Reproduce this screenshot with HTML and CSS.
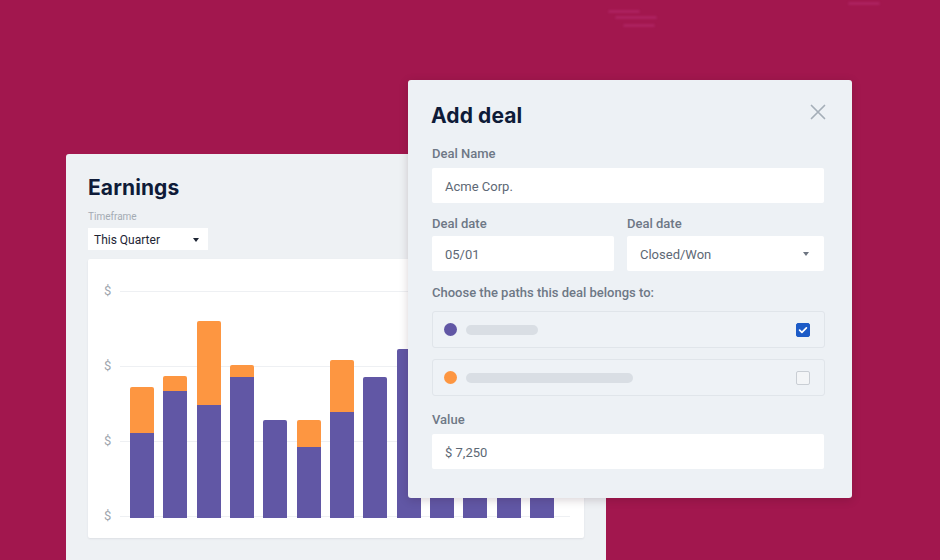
FILE: index.html
```html
<!DOCTYPE html>
<html lang="en">
<head>
<meta charset="utf-8">
<title>Add deal</title>
<link rel="stylesheet" href="styles.css">
</head>
<body>
<div class="stage">
  <span class="deco deco-a"></span>
  <span class="deco deco-b"></span>
  <span class="deco deco-c"></span>
  <span class="deco deco-d"></span>

  <section class="earnings">
    <h2 class="card-title">Earnings</h2>
    <div class="tf-label">Timeframe</div>
    <div class="tf-select"><span>This Quarter</span><span class="caret caret-dark"></span></div>
    <div class="chart">
      <div class="plot">
        <div class="axis">
          <div class="tick"><span>$</span><i></i></div>
          <div class="tick"><span>$</span><i></i></div>
          <div class="tick"><span>$</span><i></i></div>
          <div class="tick"><span>$</span><i></i></div>
        </div>
        <div class="bars">
          <div class="bar"><div class="seg o" style="height:46px"></div><div class="seg p" style="height:85px"></div></div>
          <div class="bar"><div class="seg o" style="height:15px"></div><div class="seg p" style="height:127px"></div></div>
          <div class="bar"><div class="seg o" style="height:84px"></div><div class="seg p" style="height:113px"></div></div>
          <div class="bar"><div class="seg o" style="height:12px"></div><div class="seg p" style="height:141px"></div></div>
          <div class="bar"><div class="seg p" style="height:98px"></div></div>
          <div class="bar"><div class="seg o" style="height:27px"></div><div class="seg p" style="height:71px"></div></div>
          <div class="bar"><div class="seg o" style="height:52px"></div><div class="seg p" style="height:106px"></div></div>
          <div class="bar"><div class="seg p" style="height:141px"></div></div>
          <div class="bar"><div class="seg p" style="height:169px"></div></div>
          <div class="bar"><div class="seg o" style="height:30px"></div><div class="seg p" style="height:120px"></div></div>
          <div class="bar"><div class="seg p" style="height:150px"></div></div>
          <div class="bar"><div class="seg o" style="height:24px"></div><div class="seg p" style="height:135px"></div></div>
          <div class="bar"><div class="seg p" style="height:110px"></div></div>
        </div>
      </div>
    </div>
  </section>

  <section class="modal">
    <div class="modal-head">
      <h2 class="modal-title">Add deal</h2>
      <svg class="close" width="16" height="16" viewBox="0 0 16 16" aria-hidden="true">
        <path d="M1.5 1.5 L14.5 14.5 M14.5 1.5 L1.5 14.5" stroke="#A5AEB8" stroke-width="1.7" stroke-linecap="round" fill="none"/>
      </svg>
    </div>

    <div class="field">
      <div class="label">Deal Name</div>
      <div class="input">Acme Corp.</div>
    </div>

    <div class="field date-row">
      <div>
        <div class="label">Deal date</div>
        <div class="input">05/01</div>
      </div>
      <div>
        <div class="label">Deal date</div>
        <div class="input select"><span>Closed/Won</span><span class="caret caret-gray"></span></div>
      </div>
    </div>

    <div class="paths">
      <div class="label paths-label">Choose the paths this deal belongs to:</div>
      <div class="path-row">
        <span class="dot dot-purple"></span>
        <span class="ph ph-short"></span>
        <span class="check checked">
          <svg width="14" height="14" viewBox="0 0 14 14" aria-hidden="true"><path d="M3.6 7.2 L5.9 9.4 L10.4 4.8" stroke="#fff" stroke-width="1.7" fill="none" stroke-linecap="round" stroke-linejoin="round"/></svg>
        </span>
      </div>
      <div class="path-row">
        <span class="dot dot-orange"></span>
        <span class="ph ph-long"></span>
        <span class="check"></span>
      </div>
    </div>

    <div class="field value-field">
      <div class="label">Value</div>
      <div class="input">$ 7,250</div>
    </div>
  </section>
</div>
</body>
</html>
```

FILE: styles.css
```css
html, body {
  margin: 0;
  padding: 0;
}

body {
  background: #A2174E;
  font-family: Roboto, "Liberation Sans", Arial, sans-serif;
}

.stage {
  position: relative;
  width: 940px;
  height: 560px;
  overflow: hidden;
  padding: 154px 0 0 66px;
  box-sizing: border-box;
}

/* faint blurred marks in the background */
.deco {
  position: absolute;
  height: 3px;
  border-radius: 2px;
  background: rgba(220, 80, 170, 0.2);
  filter: blur(1px);
}
.deco-a { left: 608px; top: 10px; width: 32px; }
.deco-b { left: 615px; top: 16px; width: 42px; }
.deco-c { left: 623px; top: 24px; width: 32px; }
.deco-d { left: 848px; top: 2px; width: 32px; }

/* ---------- Earnings card ---------- */
.earnings {
  width: 540px;
  height: 430px;
  background: #EEF1F4;
  border-radius: 3px;
  padding: 20px 22px 0;
  box-sizing: border-box;
}

.card-title,
.modal-title {
  margin: 0;
  font-family: Inter, "Noto Sans", sans-serif;
  font-weight: 700;
  font-size: 21px;
  line-height: 28px;
  color: #0E1B38;
  letter-spacing: 0.1px;
}

.tf-label {
  margin-top: 8px;
  font-size: 10px;
  line-height: 14px;
  color: #A4ABB3;
}

.tf-select {
  margin-top: 4px;
  width: 120px;
  height: 22px;
  background: #fff;
  display: flex;
  align-items: center;
  justify-content: space-between;
  padding: 1px 9px 0 6px;
  box-sizing: border-box;
  font-size: 12px;
  color: #1D2433;
}

.caret {
  width: 0;
  height: 0;
  border-left: 3.5px solid transparent;
  border-right: 3.5px solid transparent;
}
.caret-dark { border-top: 4px solid #1D2433; }
.caret-gray { border-top: 4px solid #6D7581; }

.chart {
  margin-top: 9px;
  width: 496px;
  height: 279px;
  background: #fff;
  border-radius: 2px;
  padding: 24px 14px 0 16px;
  box-sizing: border-box;
  box-shadow: 0 1px 2px rgba(20, 30, 50, 0.08);
}

.plot {
  display: grid;
  height: 241px;
}

.axis,
.bars {
  grid-area: 1 / 1;
}

.axis {
  display: flex;
  flex-direction: column;
  justify-content: space-between;
}

.tick {
  display: flex;
  align-items: center;
  gap: 4px;
  height: 16px;
}

.tick span {
  width: 12px;
  font-size: 13px;
  line-height: 16px;
  color: #A0A6AE;
}

.tick i {
  flex: 1;
  height: 1px;
  background: #EEF0F3;
}

.bars {
  display: flex;
  align-items: flex-end;
  gap: 9.33px;
  padding: 0 0 6px 26px;
}

.bar {
  width: 24px;
  display: flex;
  flex-direction: column;
}

.bar > :first-child {
  border-radius: 2px 2px 0 0;
}

.seg.o { background: #FD9641; }
.seg.p { background: #6157A5; }

/* ---------- Modal ---------- */
.modal {
  position: absolute;
  left: 408px;
  top: 80px;
  width: 444px;
  height: 418px;
  background: #EDF1F5;
  border-radius: 3px;
  box-shadow: 0 2px 10px rgba(40, 0, 20, 0.18);
  padding: 22px 28px 0 24px;
  box-sizing: border-box;
}

.modal-head {
  display: flex;
  justify-content: space-between;
  align-items: flex-start;
  height: 28px;
  margin-bottom: 16px;
}

.modal-title {
  margin-left: -1px;
}

.close {
  margin-top: 2px;
  margin-right: -2px;
}

.label {
  font-size: 13px;
  line-height: 16px;
  font-weight: 500;
  color: #6E7886;
  margin-bottom: 6px;
}

.input {
  height: 35px;
  background: #fff;
  border-radius: 2px;
  display: flex;
  align-items: center;
  padding: 1px 13px 0;
  box-sizing: border-box;
  font-size: 13px;
  color: #5D6875;
}

.input.select {
  justify-content: space-between;
  padding-right: 15px;
}

.field + .field {
  margin-top: 11px;
}

.date-row {
  display: grid;
  grid-template-columns: 182px 197px;
  column-gap: 13px;
  margin-top: 13px !important;
}

.date-row .label {
  margin-bottom: 4px;
}

.paths {
  margin-top: 14px;
  display: flex;
  flex-direction: column;
  gap: 11px;
}

.paths-label {
  margin-bottom: -1px;
}

.path-row {
  height: 37px;
  width: 393px;
  border: 1px solid #E0E5EA;
  border-radius: 3px;
  background: #EEF2F6;
  display: flex;
  align-items: center;
  padding: 0 14px 0 11px;
  box-sizing: border-box;
}

.dot {
  width: 13px;
  height: 13px;
  border-radius: 50%;
  flex: none;
}
.dot-purple { background: #6157A5; }
.dot-orange { background: #FD9641; }

.ph {
  margin-left: 9px;
  height: 10px;
  border-radius: 5px;
  background: #D9DEE4;
}
.ph-short { width: 72px; }
.ph-long { width: 167px; }

.check {
  margin-left: auto;
  width: 14px;
  height: 14px;
  border: 1px solid #C9CED4;
  border-radius: 2px;
  box-sizing: border-box;
  background: #F3F5F7;
  display: flex;
}

.check.checked {
  border-color: #1C5BC7;
  background: #1C5BC7;
}

.check.checked svg {
  margin: -1px;
}

.value-field {
  margin-top: 16px;
}
```
